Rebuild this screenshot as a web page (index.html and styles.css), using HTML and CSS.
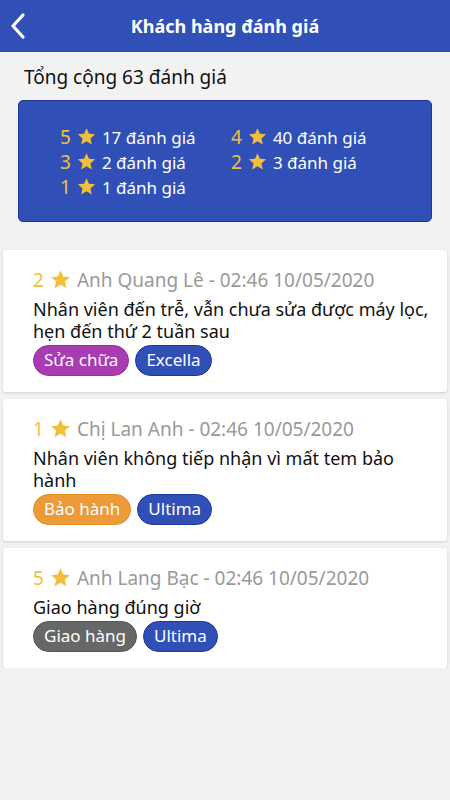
FILE: index.html
```html
<!DOCTYPE html>
<html>
  <head>
    <meta charset='UTF-8'>
    <meta name='viewport' content='width=device-width, initial-scale=1.0'>
    <title>Khách hàng đánh giá</title>
    <link rel="stylesheet" href="styles.css">
  </head>
  <body>
    <svg class='defs' width='0' height='0'>
      <symbol id='star' viewBox='0 0 24 24'>
        <path d='M12 1.5 L15.1 8.6 L22.8 9.3 L17 14.4 L18.7 22 L12 18 L5.3 22 L7 14.4 L1.2 9.3 L8.9 8.6 Z' fill='#f2bf3d'/>
      </symbol>
    </svg>

    <div class='header'>
      <div class='header__back'>
        <svg width='20' height='28' viewBox='0 0 20 28'>
          <path d='M15 3 L5 14 L15 25' fill='none' stroke='#fff' stroke-width='3.2' stroke-linecap='round' stroke-linejoin='round'/>
        </svg>
      </div>
      <div class='header__title'>Khách hàng đánh giá</div>
    </div>

    <div class='total'>Tổng cộng 63 đánh giá</div>

    <div class='summary'>
      <div class='summary__grid'>
        <div class='summary__item'><span class='rate'>5</span><svg class='star'><use href='#star'/></svg>17 đánh giá</div>
        <div class='summary__item'><span class='rate'>4</span><svg class='star'><use href='#star'/></svg>40 đánh giá</div>
        <div class='summary__item'><span class='rate'>3</span><svg class='star'><use href='#star'/></svg>2 đánh giá</div>
        <div class='summary__item'><span class='rate'>2</span><svg class='star'><use href='#star'/></svg>3 đánh giá</div>
        <div class='summary__item'><span class='rate'>1</span><svg class='star'><use href='#star'/></svg>1 đánh giá</div>
      </div>
    </div>

    <div class='list'>
      <div class='card'>
        <div class='card__meta'><span class='rate'>2</span><svg class='star star--lg'><use href='#star'/></svg>Anh Quang Lê - 02:46 10/05/2020</div>
        <div class='card__text'>Nhân viên đến trễ, vẫn chưa sửa được máy lọc, hẹn đến thứ 2 tuần sau</div>
        <div class='card__tags'>
          <span class='tag tag--purple'>Sửa chữa</span>
          <span class='tag tag--blue'>Excella</span>
        </div>
      </div>
      <div class='card'>
        <div class='card__meta'><span class='rate'>1</span><svg class='star star--lg'><use href='#star'/></svg>Chị Lan Anh - 02:46 10/05/2020</div>
        <div class='card__text'>Nhân viên không tiếp nhận vì mất tem bảo hành</div>
        <div class='card__tags'>
          <span class='tag tag--orange'>Bảo hành</span>
          <span class='tag tag--blue'>Ultima</span>
        </div>
      </div>
      <div class='card'>
        <div class='card__meta'><span class='rate'>5</span><svg class='star star--lg'><use href='#star'/></svg>Anh Lang Bạc - 02:46 10/05/2020</div>
        <div class='card__text'>Giao hàng đúng giờ</div>
        <div class='card__tags'>
          <span class='tag tag--gray'>Giao hàng</span>
          <span class='tag tag--blue'>Ultima</span>
        </div>
      </div>
    </div>
  </body>
</html>
```

FILE: styles.css
```css
html, body {
  margin: 0;
  background-color: #f2f2f2;
  font-family: 'Noto Sans', 'Open Sans', Arial, sans-serif;
  color: #111;
}

.defs {
  position: absolute;
}

.header {
  display: flex;
  align-items: center;
  justify-content: center;
  position: relative;
  height: 52px;
  background-color: #3050b7;
}

.header__back {
  position: absolute;
  top: 12px;
  left: 8px;
  height: 28px;
}

.header__title {
  color: #fff;
  font-size: 18px;
  font-weight: bold;
}

.total {
  padding: 12px 24px 0;
  height: 36px;
  font-size: 19px;
  line-height: 26px;
}

.summary {
  margin: 0 18px;
  height: 122px;
  padding: 24px 0 0 41px;
  box-sizing: border-box;
  background-color: #3050b7;
  border: 1px solid #1d35a0;
  border-radius: 5px;
  color: #fff;
}

.summary__grid {
  display: grid;
  grid-template-columns: 171px 171px;
}

.summary__item {
  display: flex;
  align-items: center;
  height: 25px;
  font-size: 17px;
  line-height: 25px;
}

.rate {
  color: #f2bf3d;
  margin-right: 6px;
  font-size: 19px;
}

.star {
  width: 19px;
  height: 19px;
  margin-right: 6px;
  margin-top: -2px;
}

.star--lg {
  width: 21px;
  height: 21px;
}

.list {
  display: flex;
  flex-direction: column;
  gap: 7px;
  padding: 28px 3px 0;
}

.card {
  padding: 16px 14px 16px 30px;
  background-color: #fff;
  border-radius: 3px;
  box-shadow: 0 1px 3px rgba(0, 0, 0, 0.15);
}

.card__meta {
  display: flex;
  align-items: center;
  height: 28px;
  font-size: 19px;
  line-height: 28px;
  color: #999;
}

.card__text {
  margin: 4px 0 3px;
  font-size: 18px;
  line-height: 22px;
}

.card__tags {
  display: flex;
  gap: 6px;
}

.tag {
  display: inline-block;
  height: 31px;
  padding: 0 10px;
  box-sizing: border-box;
  border-radius: 16px;
  font-size: 17px;
  line-height: 28px;
  color: #fff;
  border: 1px solid;
}

.tag--purple {
  background-color: #a93bb3;
  border-color: #9a2aa5;
}

.tag--blue {
  background-color: #3050b7;
  border-color: #1d35a0;
}

.tag--orange {
  background-color: #ec9b38;
  border-color: #e38d25;
}

.tag--gray {
  background-color: #666868;
  border-color: #555;
}
```
